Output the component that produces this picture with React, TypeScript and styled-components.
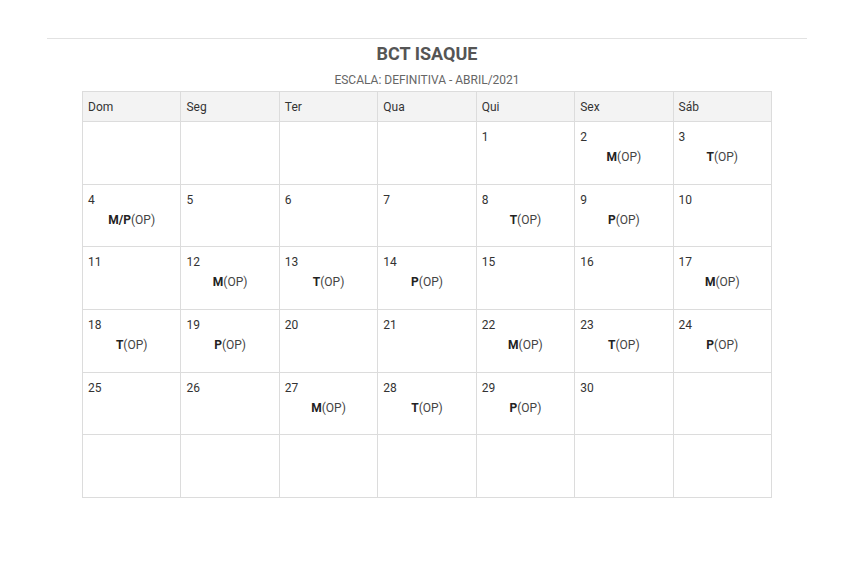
import React from "react";
import styled, { createGlobalStyle } from "styled-components";

const Global = createGlobalStyle`
  html, body { margin: 0; padding: 0; background: #fff; }
  body { font-family: Roboto, "Liberation Sans", sans-serif; }
`;

const Page = styled.div`
  width: 850px;
  padding: 38px 0 0 4px;
  box-sizing: border-box;
  display: flex;
  flex-direction: column;
  align-items: center;
`;

const Rule = styled.div`
  width: 760px;
  border-top: 1px solid #e2e2e2;
`;

const Title = styled.h1`
  margin: 4px 0 0;
  font-family: Roboto, sans-serif;
  font-weight: 700;
  font-size: 18px;
  line-height: 22px;
  color: #555;
`;

const Subtitle = styled.div`
  margin-top: 8px;
  font-family: Roboto, sans-serif;
  font-size: 12px;
  line-height: 14px;
  color: #666;
`;

const Grid = styled.div`
  margin-top: 4px;
  width: 689px;
  display: grid;
  grid-template-columns: repeat(7, 1fr);
  border-top: 1px solid #dcdcdc;
  border-left: 1px solid #dcdcdc;
`;

const Head = styled.div`
  height: 29px;
  background: #f3f3f3;
  border-right: 1px solid #dcdcdc;
  border-bottom: 1px solid #dcdcdc;
  padding: 0 5px;
  display: flex;
  align-items: center;
  font-family: Roboto, sans-serif;
  font-size: 12px;
  color: #333;
`;

const Cell = styled.div`
  height: 62.7px;
  border-right: 1px solid #dcdcdc;
  border-bottom: 1px solid #dcdcdc;
  padding: 8px 5px 0;
  box-sizing: border-box;
  font-family: Roboto, sans-serif;
  font-size: 12px;
  color: #333;
`;

const Num = styled.div`
  line-height: 14px;
`;

const Shift = styled.div`
  margin-top: 6px;
  text-align: center;
  line-height: 14px;
  color: #444;
  b { color: #222; }
`;

const heads = ["Dom", "Seg", "Ter", "Qua", "Qui", "Sex", "Sáb"];

type Day = { n?: number; s?: string };
const shifts: Record<number, string> = {
  2: "M", 3: "T", 4: "M/P", 8: "T", 9: "P", 12: "M", 13: "T", 14: "P",
  17: "M", 18: "T", 19: "P", 22: "M", 23: "T", 24: "P", 27: "M", 28: "T", 29: "P",
};

const days: Day[] = [];
for (let i = 0; i < 4; i++) days.push({});
for (let d = 1; d <= 30; d++) days.push({ n: d, s: shifts[d] });
while (days.length < 42) days.push({});

export default function App() {
  return (
    <>
      <Global />
      <Page>
        <Rule />
        <Title>BCT ISAQUE</Title>
        <Subtitle>ESCALA: DEFINITIVA - ABRIL/2021</Subtitle>
        <Grid>
          {heads.map((h) => (
            <Head key={h}>{h}</Head>
          ))}
          {days.map((d, i) => (
            <Cell key={i}>
              {d.n !== undefined && <Num>{d.n}</Num>}
              {d.s && (
                <Shift>
                  <b>{d.s}</b>(OP)
                </Shift>
              )}
            </Cell>
          ))}
        </Grid>
      </Page>
    </>
  );
}
